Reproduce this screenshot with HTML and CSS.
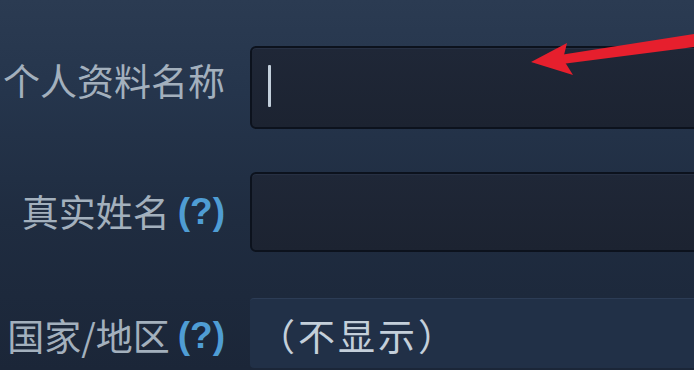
FILE: index.html
```html
<!DOCTYPE html>
<html lang="zh-CN">
<head>
<meta charset="utf-8">
<title>个人资料</title>
<link rel="stylesheet" href="styles.css">
</head>
<body>
<div class="page">
  <div class="form">
    <div class="row row-name">
      <div class="label label-first">个人资料名称</div>
      <div class="field field-input"><span class="caret"></span></div>
    </div>
    <div class="row row-real">
      <div class="label">真实姓名 <span class="help">(?)</span></div>
      <div class="field field-input"></div>
    </div>
    <div class="row row-country">
      <div class="label">国家/地区 <span class="help">(?)</span></div>
      <div class="field field-select"><span class="select-text">（不显示）</span></div>
    </div>
  </div>
  <svg class="arrow" width="694" height="370" viewBox="0 0 694 370" aria-hidden="true">
    <polygon points="560,55 694,34 694,47 562,64" fill="#e61f2d"/>
    <polygon points="531,62 567,43 563,59 573,75" fill="#e61f2d"/>
  </svg>
</div>
</body>
</html>
```

FILE: styles.css
```css
html, body {
  margin: 0;
  padding: 0;
}

body {
  width: 694px;
  height: 370px;
  overflow: hidden;
  background: linear-gradient(180deg, #2b3b52 0%, #25354c 25%, #1f2c40 60%, #1b2638 100%);
  font-family: "Noto Sans CJK SC", "Noto Sans", sans-serif;
}

.page {
  position: relative;
  width: 694px;
  height: 370px;
}

.form {
  display: flex;
  flex-direction: column;
  padding-top: 46px;
}

.row {
  display: grid;
  grid-template-columns: 225px 470px;
  column-gap: 25px;
}

.row-name {
  height: 83px;
}

.row-real {
  height: 80px;
  margin-top: 43px;
}

.row-country {
  height: 70px;
  margin-top: 46px;
}

.label {
  display: flex;
  align-items: center;
  justify-content: flex-end;
  color: #a3b0bd;
  font-size: 37px;
  line-height: 1;
  white-space: nowrap;
}

.label-first {
  padding-bottom: 14px;
}

.row-real .label {
  padding-bottom: 2px;
}

.row-country .label {
  padding-top: 4px;
}

.help {
  font-family: "Liberation Sans", Arial, sans-serif;
  font-weight: bold;
  color: #4f9dd4;
  margin-left: 8px;
}

.field {
  box-sizing: border-box;
  display: flex;
  align-items: center;
}

.field-input {
  background: linear-gradient(180deg, #1f2737 0%, #1c2331 100%);
  border: 2px solid #0c121d;
  border-radius: 6px;
  box-shadow: inset 0 1px 0 #273043;
  padding-left: 16px;
}

.caret {
  display: block;
  width: 3px;
  height: 42px;
  background: #c3cfdb;
  border-radius: 1px;
  margin-bottom: 4px;
}

.field-select {
  background: #213047;
  border-top: 1px solid #2c3c55;
  border-radius: 4px;
  padding-left: 8px;
  padding-top: 4px;
}

.select-text {
  color: #c4cfda;
  font-size: 37px;
  line-height: 1;
  letter-spacing: 3px;
}

.arrow {
  position: absolute;
  left: 0;
  top: 0;
}
```
